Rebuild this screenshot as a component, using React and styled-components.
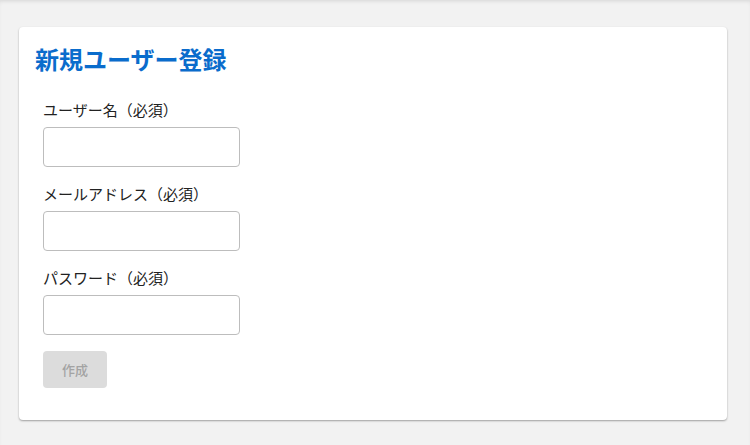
import React, { useState } from "react";
import styled, { createGlobalStyle } from "styled-components";

const GlobalStyle = createGlobalStyle`
  html, body {
    margin: 0;
    padding: 0;
    background: #f2f2f2;
  }
  body {
    font-family: "Noto Sans CJK JP", "Noto Sans", sans-serif;
    color: #222;
  }
`;

const Page = styled.div`
  min-height: 445px;
  box-sizing: border-box;
  padding: 27px 23px 0 19px;
  box-shadow: inset 0 3px 4px -2px rgba(0, 0, 0, 0.12);
`;

const Card = styled.div`
  background: #fff;
  border-radius: 4px;
  box-shadow: 0 1px 2px rgba(0, 0, 0, 0.35);
  padding: 16px 16px 32px;
`;

const Title = styled.h2`
  margin: 0 0 24px;
  font-size: 24px;
  line-height: 32px;
  font-weight: 700;
  color: #0a6ccc;
`;

const Form = styled.form`
  padding-left: 8px;
  display: flex;
  flex-direction: column;
  align-items: flex-start;
`;

const Field = styled.div`
  display: flex;
  flex-direction: column;
  margin-bottom: 16px;
`;

const Label = styled.label`
  font-size: 15px;
  line-height: 22px;
  margin-bottom: 6px;
  color: #222;
`;

const Input = styled.input`
  box-sizing: border-box;
  width: 197px;
  height: 40px;
  border: 1px solid #bdbdbd;
  border-radius: 4px;
  padding: 0 10px;
  font-size: 15px;
  font-family: inherit;
  outline: none;
`;

const Button = styled.button`
  width: 64px;
  height: 37px;
  border: none;
  border-radius: 4px;
  background: ${(p) => (p.disabled ? "#dcdcdc" : "#0a6ccc")};
  color: ${(p) => (p.disabled ? "#a3a3a3" : "#fff")};
  font-size: 13px;
  font-family: inherit;
  font-weight: 500;
  cursor: ${(p) => (p.disabled ? "default" : "pointer")};
`;

const fields = [
  { name: "username", label: "ユーザー名（必須）", type: "text" },
  { name: "email", label: "メールアドレス（必須）", type: "email" },
  { name: "password", label: "パスワード（必須）", type: "password" },
];

const App = () => {
  const [values, setValues] = useState({ username: "", email: "", password: "" });
  const ready = fields.every((f) => values[f.name].trim() !== "");

  return (
    <>
      <GlobalStyle />
      <Page>
        <Card>
          <Title>新規ユーザー登録</Title>
          <Form onSubmit={(e) => e.preventDefault()}>
            {fields.map((f) => (
              <Field key={f.name}>
                <Label htmlFor={f.name}>{f.label}</Label>
                <Input
                  id={f.name}
                  type={f.type}
                  value={values[f.name]}
                  onChange={(e) => setValues({ ...values, [f.name]: e.target.value })}
                />
              </Field>
            ))}
            <Button type="submit" disabled={!ready}>作成</Button>
          </Form>
        </Card>
      </Page>
    </>
  );
};

export default App;
